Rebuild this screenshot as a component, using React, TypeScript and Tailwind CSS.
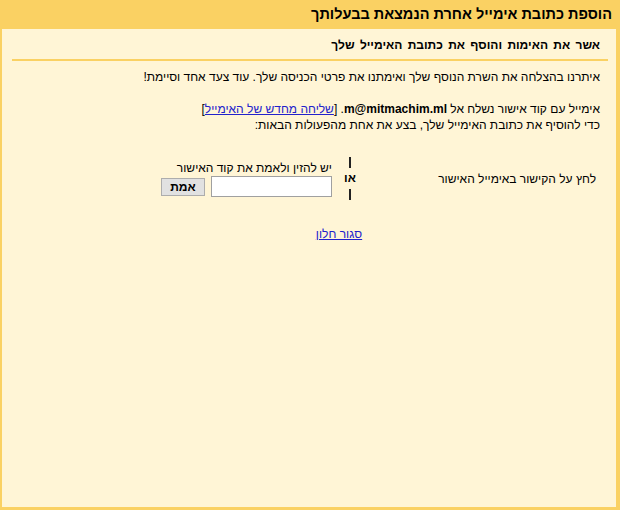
const App = () => {
  return (
    <div
      dir="rtl"
      className="h-[510px] w-full bg-[#fad163] flex flex-col font-['Liberation_Sans',Arial,sans-serif] text-[12px] text-black"
    >
      <div className="h-[29px] pr-[8px] flex items-center">
        <h1 className="text-[14.5px] font-bold leading-none">
          הוספת כתובת אימייל אחרת הנמצאת בבעלותך
        </h1>
      </div>
      <div className="flex-1 ml-[2px] mr-[4px] mb-[3px] bg-[#fff5d6]">
        <div className="pt-[8px] pr-[16px] text-[12px] [word-spacing:2px] font-bold leading-[16px]">
          אשר את האימות והוסף את כתובת האימייל שלך
        </div>
        <div className="mt-[6px] ml-[10px] mr-[8px] h-[2px] bg-[#fad163]" />

        <div className="pt-[8px] pr-[16px] leading-[16px]">
          <p>איתרנו בהצלחה את השרת הנוסף שלך ואימתנו את פרטי הכניסה שלך. עוד צעד אחד וסיימת!</p>
          <p className="mt-[16px]">
            אימייל עם קוד אישור נשלח אל <b>m@mitmachim.ml</b>. [
            <a href="#" className="text-[#2222cc] underline">
              שליחה מחדש של האימייל
            </a>
            ]
          </p>
          <p>כדי להוסיף את כתובת האימייל שלך, בצע את אחת מהפעולות הבאות:</p>
        </div>

        <div className="mt-[24px] flex items-center">
          <div className="w-[258px] pr-[20px]">לחץ על הקישור באימייל האישור</div>
          <div className="w-[16px] flex flex-col items-center font-bold">
            <span className="w-[2px] h-[11px] bg-[#222]" />
            <span className="py-[4px] leading-[13px]">או</span>
            <span className="w-[2px] h-[11px] bg-[#222]" />
          </div>
          <div className="pr-[10px] flex flex-col items-start">
            <label className="leading-[15px]">יש להזין ולאמת את קוד האישור</label>
            <div className="flex items-center gap-[6px]">
              <input
                type="text"
                className="w-[121px] h-[21px] bg-white border border-[#a0a0a0] outline-none"
              />
              <button className="h-[18px] w-[44px] bg-[#e1e1e1] border border-[#adadad] text-[12px] font-bold leading-none mt-[2px]">
                אמת
              </button>
            </div>
          </div>
        </div>

        <div className="mt-[26px] flex justify-center pl-[60px]">
          <a href="#" className="text-[#2222cc] underline leading-[16px]">
            סגור חלון
          </a>
        </div>
      </div>
    </div>
  );
};

export default App;
